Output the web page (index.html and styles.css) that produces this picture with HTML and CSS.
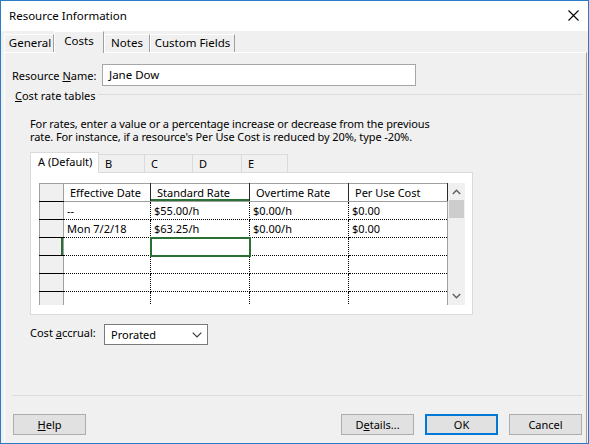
FILE: index.html
```html
<!DOCTYPE html>
<html>
<head>
<meta charset="utf-8">
<link rel="stylesheet" href="styles.css">
</head>
<body>
<div class="window">
  <div class="titlebar">
    <span class="title">Resource Information</span>
    <svg class="close" width="11" height="11" viewBox="0 0 11 11"><path d="M0.5 0.5 L10.5 10.5 M10.5 0.5 L0.5 10.5" stroke="#000" stroke-width="1.1" fill="none"/></svg>
  </div>
  <div class="tabs">
    <div class="tab t-general">General</div>
    <div class="tab t-costs active">Costs</div>
    <div class="tab t-notes">Notes</div>
    <div class="tab t-custom">Custom Fields</div>
  </div>
  <div class="panel">
    <div class="name-row">
      <span class="label">Resource <u>N</u>ame:</span>
      <div class="textbox">Jane Dow</div>
    </div>
    <div class="group-title">
      <span><u>C</u>ost rate tables</span>
      <div class="rule"></div>
    </div>
    <div class="hint">
      <div class="hint-line">For rates, enter a value or a percentage increase or decrease from the previous</div>
      <div class="hint-line">rate. For instance, if a resource's Per Use Cost is reduced by 20%, type -20%.</div>
    </div>
    <div class="itabs">
      <div class="itab active">A (Default)</div>
      <div class="itab">B</div>
      <div class="itab w48">C</div>
      <div class="itab w49">D</div>
      <div class="itab">E</div>
    </div>
    <div class="ipanel">
      <div class="sheet-wrap">
        <div class="sheet">
          <table class="grid">
            <colgroup>
              <col class="c-rh"><col class="c-date"><col class="c-rate"><col class="c-rate"><col class="c-rate">
            </colgroup>
            <thead>
              <tr>
                <th class="rh"></th>
                <th>Effective Date</th>
                <th class="active-col">Standard Rate</th>
                <th>Overtime Rate</th>
                <th class="last">Per Use Cost</th>
              </tr>
            </thead>
            <tbody>
              <tr><td class="rh"></td><td>--</td><td>$55.00/h</td><td>$0.00/h</td><td class="last">$0.00</td></tr>
              <tr><td class="rh"></td><td>Mon 7/2/18</td><td>$63.25/h</td><td>$0.00/h</td><td class="last">$0.00</td></tr>
              <tr><td class="rh active-row"></td><td></td><td class="selected"></td><td></td><td class="last"></td></tr>
              <tr><td class="rh"></td><td></td><td></td><td></td><td class="last"></td></tr>
              <tr><td class="rh"></td><td></td><td></td><td></td><td class="last"></td></tr>
              <tr><td class="rh"></td><td></td><td></td><td></td><td class="last"></td></tr>
            </tbody>
          </table>
        </div>
        <div class="vscroll">
          <svg class="arrow" width="9" height="6" viewBox="0 0 9 6"><path d="M0.8 5 L4.5 1.3 L8.2 5" stroke="#606060" stroke-width="1.4" fill="none"/></svg>
          <div class="thumb"></div>
          <div class="track"></div>
          <svg class="arrow" width="9" height="6" viewBox="0 0 9 6"><path d="M0.8 1 L4.5 4.7 L8.2 1" stroke="#606060" stroke-width="1.4" fill="none"/></svg>
        </div>
      </div>
    </div>
    <div class="accrual">
      <span class="label">Cost <u>a</u>ccrual:</span>
      <div class="select">
        <span>Prorated</span>
        <svg width="10" height="6" viewBox="0 0 10 6"><path d="M0.7 0.7 L5 5 L9.3 0.7" stroke="#333" stroke-width="1.1" fill="none"/></svg>
      </div>
    </div>
    <div class="separator"></div>
    <div class="footer">
      <div class="btn"><u>H</u>elp</div>
      <div class="spacer"></div>
      <div class="btn">D<u>e</u>tails...</div>
      <div class="btn default">OK</div>
      <div class="btn">Cancel</div>
    </div>
  </div>
</div>
</body>
</html>
```

FILE: styles.css
```css
* { box-sizing: border-box; }
html, body { margin: 0; padding: 0; }
body {
  font-family: "Noto Sans", "Open Sans", sans-serif;
  font-size: 11px;
  color: #000;
  background: #f0f0f0;
}
u { text-decoration: underline; text-underline-offset: 1px; }

.window {
  width: 589px;
  height: 444px;
  border: 1px solid #2b7cc6;
  background: #f0f0f0;
  display: flex;
  flex-direction: column;
  overflow: hidden;
}

.titlebar {
  height: 30px;
  flex: none;
  background: #fff;
  display: flex;
  align-items: center;
  justify-content: space-between;
  padding: 0 9px 1px 8px;
  font-size: 11.5px;
}
.close { display: block; }

.tabs {
  height: 21px;
  flex: none;
  display: flex;
  align-items: flex-end;
  padding-left: 3px;
  font-size: 11.5px;
}
.tab {
  height: 18px;
  line-height: 16px;
  text-align: center;
  border-top: 1px solid #fff;
  border-left: 1px solid #fff;
  border-right: 1px solid #a0a0a0;
  background: #f0f0f0;
  white-space: nowrap;
}
.tab.active {
  height: 22px;
  line-height: 17px;
  margin-bottom: -1px;
  position: relative;
  z-index: 1;
}
.t-general { width: 50px; padding-left: 2px; }
.t-costs { width: 50px; }
.t-notes { width: 46px; }
.t-custom { width: 85px; }

.panel {
  flex: 1;
  margin: 0 1px 0 3px;
  border-top: 1px solid #fff;
  border-left: 1px solid #fff;
  border-right: 1px solid #a0a0a0;
  display: flex;
  flex-direction: column;
}

.name-row {
  display: flex;
  align-items: center;
  margin-top: 11px;
  height: 22px;
  padding-left: 7px;
}
.name-row .label { width: 90px; flex: none; white-space: nowrap; }
.textbox {
  width: 314px;
  height: 22px;
  border: 1px solid #a6a6a6;
  background: #fff;
  padding-left: 6px;
  line-height: 20px;
  font-size: 11.5px;
}

.group-title {
  display: flex;
  align-items: center;
  height: 14px;
  margin-top: 2px;
  padding-left: 10px;
  padding-right: 3px;
  white-space: nowrap;
}
.group-title .rule {
  flex: 1;
  height: 1px;
  background: #dcdcdc;
  margin-left: 3px;
  margin-top: -1px;
}

.hint {
  margin: 15px 0 0 25px;
  letter-spacing: -0.1px;
  white-space: nowrap;
}
.hint-line {
  height: 13px;
  line-height: 13px;
}

.itabs {
  display: flex;
  align-items: flex-end;
  margin: 9px 0 0 25px;
  height: 20px;
}
.itab {
  width: 46px;
  height: 18px;
  line-height: 17px;
  padding-left: 6px;
  border: 1px solid #dadada;
  border-bottom: none;
  border-left: none;
  background: #f0f0f0;
}
.itab.w48 { width: 48px; }
.itab.w49 { width: 49px; }
.itab.active {
  width: 69px;
  height: 21px;
  line-height: 18px;
  padding-left: 7px;
  border-left: 1px solid #dadada;
  background: #fff;
  margin-bottom: -1px;
  position: relative;
  z-index: 1;
  white-space: nowrap;
}

.ipanel {
  width: 443px;
  height: 143px;
  margin-left: 25px;
  border: 1px solid #dadada;
  background: #fff;
  padding: 10px 0 0 8px;
}
.sheet-wrap {
  display: flex;
  height: 122px;
  width: 426px;
}
.sheet {
  width: 409px;
  height: 122px;
  overflow: hidden;
}
.grid {
  border-collapse: collapse;
  table-layout: fixed;
  width: 409px;
}
.c-rh { width: 24px; }
.c-date { width: 87px; }
.c-rate { width: 99px; }
.grid th, .grid td {
  height: 18px;
  padding: 0 0 0 3px;
  white-space: nowrap;
  font-weight: normal;
  text-align: left;
  line-height: 16px;
}
.grid th {
  padding-left: 6px;
  border-top: 1px solid #a0a0a0;
  border-right: 1px solid #2a2a2a;
  border-bottom: 1px solid #a0a0a0;
  background: #fff;
}
.grid th.rh {
  background: #f0f0f0;
  border-left: 1px solid #a0a0a0;
  border-right: 1px solid #a0a0a0;
  border-bottom: 1px solid #000;
}
.grid th.active-col { box-shadow: inset 0 -2px 0 #2a7033; }
.grid td {
  border-right: 1px dotted #000;
  border-bottom: 1px dotted #000;
}
.grid td.rh {
  background: #f0f0f0;
  border-left: 1px solid #a0a0a0;
  border-right: 1px solid #a0a0a0;
  border-bottom: 1px solid #000;
}
.grid td.rh.active-row { box-shadow: inset -2px 0 0 #2a7033; }
.grid td.last, .grid th.last { border-right: 1px solid #a0a0a0; }
.grid th.last { border-right-color: #2a2a2a; }
.grid td.selected {
  outline: 2px solid #2a7033;
  outline-offset: -1px;
}

.vscroll {
  width: 17px;
  height: 122px;
  background: #f0f0f0;
  display: flex;
  flex-direction: column;
  align-items: center;
}
.vscroll .arrow { flex: none; margin: 6px 0 5px; }
.vscroll .arrow:last-child { margin: 5px 0 6px; }
.thumb {
  width: 15px;
  height: 18px;
  background: #cdcdcd;
  flex: none;
}
.track { flex: 1; }

.accrual {
  display: flex;
  align-items: center;
  margin: 9px 0 0 25px;
  height: 21px;
}
.accrual .label { width: 74px; flex: none; margin-top: -5px; white-space: nowrap; }
.select {
  width: 104px;
  height: 21px;
  border: 1px solid #7a7a7a;
  background: #fff;
  display: flex;
  align-items: center;
  justify-content: space-between;
  padding: 0 5px 0 6px;
}

.separator {
  height: 1px;
  background: #dcdcdc;
  margin: 50px 3px 0 7px;
}

.footer {
  display: flex;
  margin-top: 18px;
  padding-left: 8px;
  padding-right: 4px;
  gap: 11px;
}
.spacer { flex: 1; }
.btn {
  width: 73px;
  height: 21px;
  line-height: 19px;
  text-align: center;
  background: #e1e1e1;
  border: 1px solid #adadad;
}
.btn.default {
  border: 2px solid #0078d7;
  line-height: 17px;
}
```
